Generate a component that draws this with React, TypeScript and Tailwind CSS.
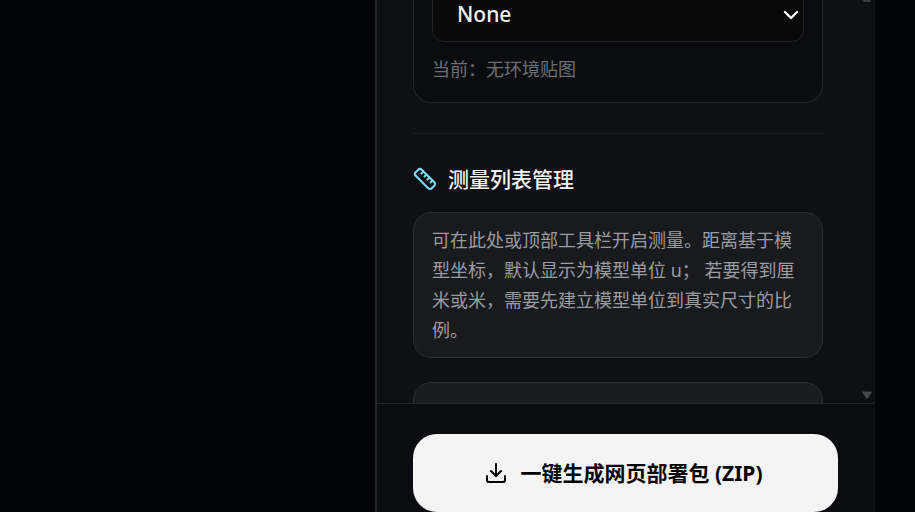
import { useState } from 'react';
import { ChevronDown, Download, Ruler } from 'lucide-react';

const envOptions = [
  { value: 'none', label: 'None', hint: '无环境贴图' },
];

function EnvironmentCard() {
  const [env, setEnv] = useState('none');
  const current = envOptions.find((o) => o.value === env);

  return (
    <div className="rounded-b-[18px] border border-t-0 border-[#232428] bg-[#0b0c10] px-[18px] pb-[18px]">
      <div className="relative">
        <select
          aria-label="环境贴图"
          value={env}
          onChange={(e) => setEnv(e.target.value)}
          className="h-[54px] w-full appearance-none rounded-xl border border-[#242427] bg-[#09090a] px-6 pb-0.5 text-[21px] leading-[30px] font-medium text-[#f4f4f5] outline-none"
        >
          {envOptions.map((o) => (
            <option key={o.value} value={o.value}>{o.label}</option>
          ))}
        </select>
        <ChevronDown className="pointer-events-none absolute top-[15px] right-px h-6 w-6 text-white" strokeWidth={2.4} />
      </div>
      <p className="mt-3 text-[18px] leading-[30px] text-[#6d6e74]">当前：{current?.hint}</p>
    </div>
  );
}

function MeasureSection() {
  return (
    <section className="mt-[30px] border-t border-[#1b1c20] pt-[29px]">
      <h2 className="flex items-center gap-[11px] text-[21px] leading-8 font-medium text-[#f4f4f5]">
        <Ruler className="h-6 w-6 text-[#7fdcf8]" />
        测量列表管理
      </h2>
      <div className="mt-[17px] rounded-[18px] border border-[#2c2d31] bg-[#191a1e] px-[18px] py-3 text-[18px] leading-[30px] text-[#9b9ca1]">
        可在此处或顶部工具栏开启测量。距离基于模型坐标，默认显示为模型单位 u； 若要得到厘米或米，需要先建立模型单位到真实尺寸的比例。
      </div>
      <div className="mt-6 h-32 rounded-[18px] border border-[#2c2d31] bg-[#1b1c20]" />
    </section>
  );
}

function ScrollTrack() {
  return (
    <div className="flex w-[15px] shrink-0 flex-col items-center justify-between pb-1" aria-hidden="true">
      <div className="h-0.5 w-2 rounded-b-full bg-[#3c3d41]" />
      <svg className="h-2 w-2.5" viewBox="0 0 10 8">
        <path d="M1.2 1.3h7.6L5 6.7z" fill="#46474b" stroke="#46474b" strokeWidth="1.8" strokeLinejoin="round" />
      </svg>
    </div>
  );
}

export default function App() {
  return (
    <div className="flex h-screen overflow-hidden bg-[#040507] pr-10 font-['Noto_Sans','Noto_Sans_CJK_SC',sans-serif]">
      <main className="min-w-0 flex-1" />
      <aside className="flex w-[500px] shrink-0 flex-col border-r border-l-2 border-r-[#151619] border-l-[#242529] bg-[#0f1014]">
        <div className="flex min-h-0 flex-1">
          <div className="min-w-0 flex-1 overflow-hidden px-9">
            {/* 列表已向下滚动 */}
            <div className="-mt-3">
              <EnvironmentCard />
              <MeasureSection />
            </div>
          </div>
          <ScrollTrack />
        </div>
        <footer className="border-t border-[#25262a] bg-[#0b0c0f] px-9 pt-[30px]">
          <button className="flex h-[78px] w-full items-center justify-center gap-3 rounded-3xl bg-[#f4f4f4] pr-1 text-[21px] leading-8 font-bold text-black">
            <Download className="h-6 w-6" />
            一键生成网页部署包 (ZIP)
          </button>
        </footer>
      </aside>
    </div>
  );
}
